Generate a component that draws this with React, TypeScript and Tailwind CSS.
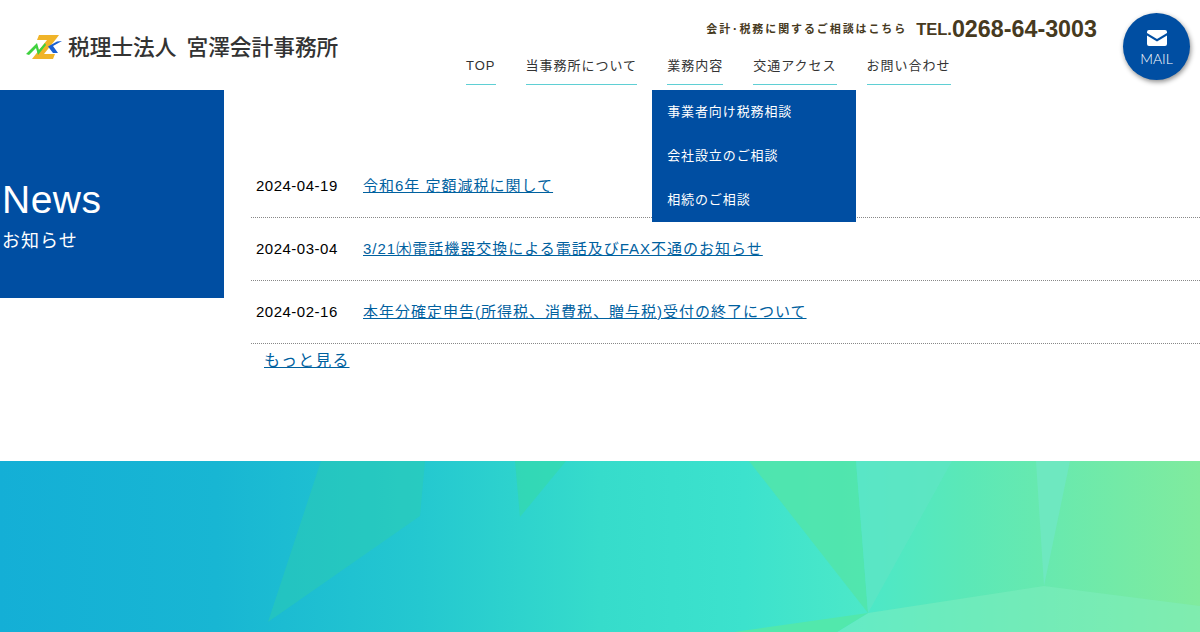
const menu = ["TOP", "当事務所について", "業務内容", "交通アクセス", "お問い合わせ"];
const subMenu = ["事業者向け税務相談", "会社設立のご相談", "相続のご相談"];
const news = [
  { date: "2024-04-19", title: "令和6年 定額減税に関して" },
  { date: "2024-03-04", title: "3/21㈭電話機器交換による電話及びFAX不通のお知らせ" },
  { date: "2024-02-16", title: "本年分確定申告(所得税、消費税、贈与税)受付の終了について" },
];

function Logo() {
  return (
    <svg width="37" height="26" viewBox="0 0 37 26" className="shrink-0">
      <path d="M13 0H33L30 4L18 19H29L27 24H6L21 5H11Z" fill="#f0b429" />
      <path d="M0 19L11 8L13 15L19 8L20 10L12 20L10 13L3 20Z" fill="#3fd13f" />
      <path d="M36 6L27 11L32 18L27 18L22 11.500L31 6.500Z" fill="#1a5fd0" />
    </svg>
  );
}

function Band() {
  return (
    <div className="relative h-[171px] overflow-hidden bg-[linear-gradient(90deg,#14afd6_0%,#18b6d3_18%,#24c8d0_35%,#36dccb_50%,#3ce2cd_62%,#4ce8c8_72%,#5ae8b8_80%,#80eb9e_100%)]">
      <svg viewBox="0 0 1200 171" className="absolute inset-0 h-full w-full">
        <polygon points="321,0 425,0 420,55 268,161" fill="#2fd0a8" opacity="0.4" />
        <polygon points="515,0 566,0 520,56" fill="#36dba0" opacity="0.5" />
        <polygon points="749,0 856,0 868,152" fill="#52e5a8" opacity="0.8" />
        <polygon points="856,0 952,0 868,152" fill="#5fe6c4" opacity="0.7" />
        <polygon points="1036,0 1070,0 1044,125" fill="#6ee8c0" />
        <polygon points="868,152 1044,125 1200,145 1200,171 837,171" fill="#80edc0" opacity="0.5" />
        <polygon points="734,171 868,152 837,171" fill="#52e8ac" />
      </svg>
    </div>
  );
}

export default function App() {
  return (
    <div className="h-[632px] overflow-hidden bg-white font-['Liberation_Sans','Noto_Sans_CJK_JP',sans-serif] text-black">
      <header className="flex h-[90px]">
        <div className="flex w-[466px] shrink-0 items-center gap-[5px] pl-[26px] pt-[5px]">
          <Logo />
          <span className="whitespace-nowrap text-[21.700px] font-medium leading-none text-[#333]">
            税理士法人<span className="ml-[10px]">宮澤会計事務所</span>
          </span>
        </div>

        <div className="flex w-[485px] flex-col">
          <div className="h-[41px]" />
          <nav className="flex gap-[30px]">
            {menu.map((label, i) => (
              <div key={label} className="relative">
                <a className="block h-[44px] whitespace-nowrap border-b border-[#5fcfd4] pt-[14px] text-[13px] leading-[21px] tracking-[1px] text-[#333]">
                  {label}
                </a>
                {i === 2 ? (
                  <ul className="absolute left-[-15px] top-[49px] z-10 w-[204px] bg-[#004ea2]">
                    {subMenu.map((item) => (
                      <li key={item} className="flex h-[44px] items-center whitespace-nowrap pl-[15px] text-[13px] tracking-[0.9px] text-white">
                        {item}
                      </li>
                    ))}
                  </ul>
                ) : null}
              </div>
            ))}
          </nav>
        </div>

        <div className="relative flex-1">
          <div className="absolute right-[103px] top-[14px] flex items-center whitespace-nowrap text-[#473a1e]">
            <span className="mr-[9px] text-[11px] font-bold tracking-[1.900px]">会計･税務に関するご相談はこちら</span>
            <span className="text-[16.500px] font-bold leading-[30px]">TEL.</span>
            <span className="text-[23.300px] font-bold leading-[30px]">0268-64-3003</span>
          </div>
          <a className="absolute right-[10px] top-[13px] flex h-[67px] w-[67px] flex-col items-center rounded-full bg-[#004ea2] pt-[17px] shadow-[1px_2px_5px_rgba(0,0,0,0.45)]">
            <svg width="20" height="16" viewBox="0 0 20 16">
              <path d="M2 0H18A2 2 0 0 1 20 2V3L10 9L0 3V2A2 2 0 0 1 2 0Z" fill="#fff" />
              <path d="M0 5.500L10 11.500L20 5.500V14A2 2 0 0 1 18 16H2A2 2 0 0 1 0 14Z" fill="#fff" />
            </svg>
            <span className="mt-[4px] font-['Lato',sans-serif] text-[14px] font-light leading-[18px] text-white">MAIL</span>
          </a>
        </div>
      </header>

      <main className="flex h-[371px]">
        <aside className="h-[208px] w-[224px] shrink-0 bg-[#004ea2] pl-[2px] pt-[87px] text-white">
          <h2 className="text-[39px] leading-[46px] tracking-[0.5px]">News</h2>
          <p className="mt-[5px] text-[18px] leading-[26px] tracking-[1px]">お知らせ</p>
        </aside>

        <section className="ml-[27px] flex-1 pt-[65px]">
          {news.map((row) => (
            <div key={row.date} className="flex h-[63px] items-center border-b border-dotted border-[#888] pl-[5px] text-[15px]">
              <span className="w-[107px] shrink-0 tracking-[0.5px]">{row.date}</span>
              <a className="whitespace-nowrap tracking-[1px] text-[#00619f] underline">{row.title}</a>
            </div>
          ))}
          <a className="ml-[13px] mt-[6px] inline-block text-[16px] leading-[22px] tracking-[1.100px] text-[#00619f] underline">もっと見る </a>
        </section>
      </main>

      <Band />
    </div>
  );
}
